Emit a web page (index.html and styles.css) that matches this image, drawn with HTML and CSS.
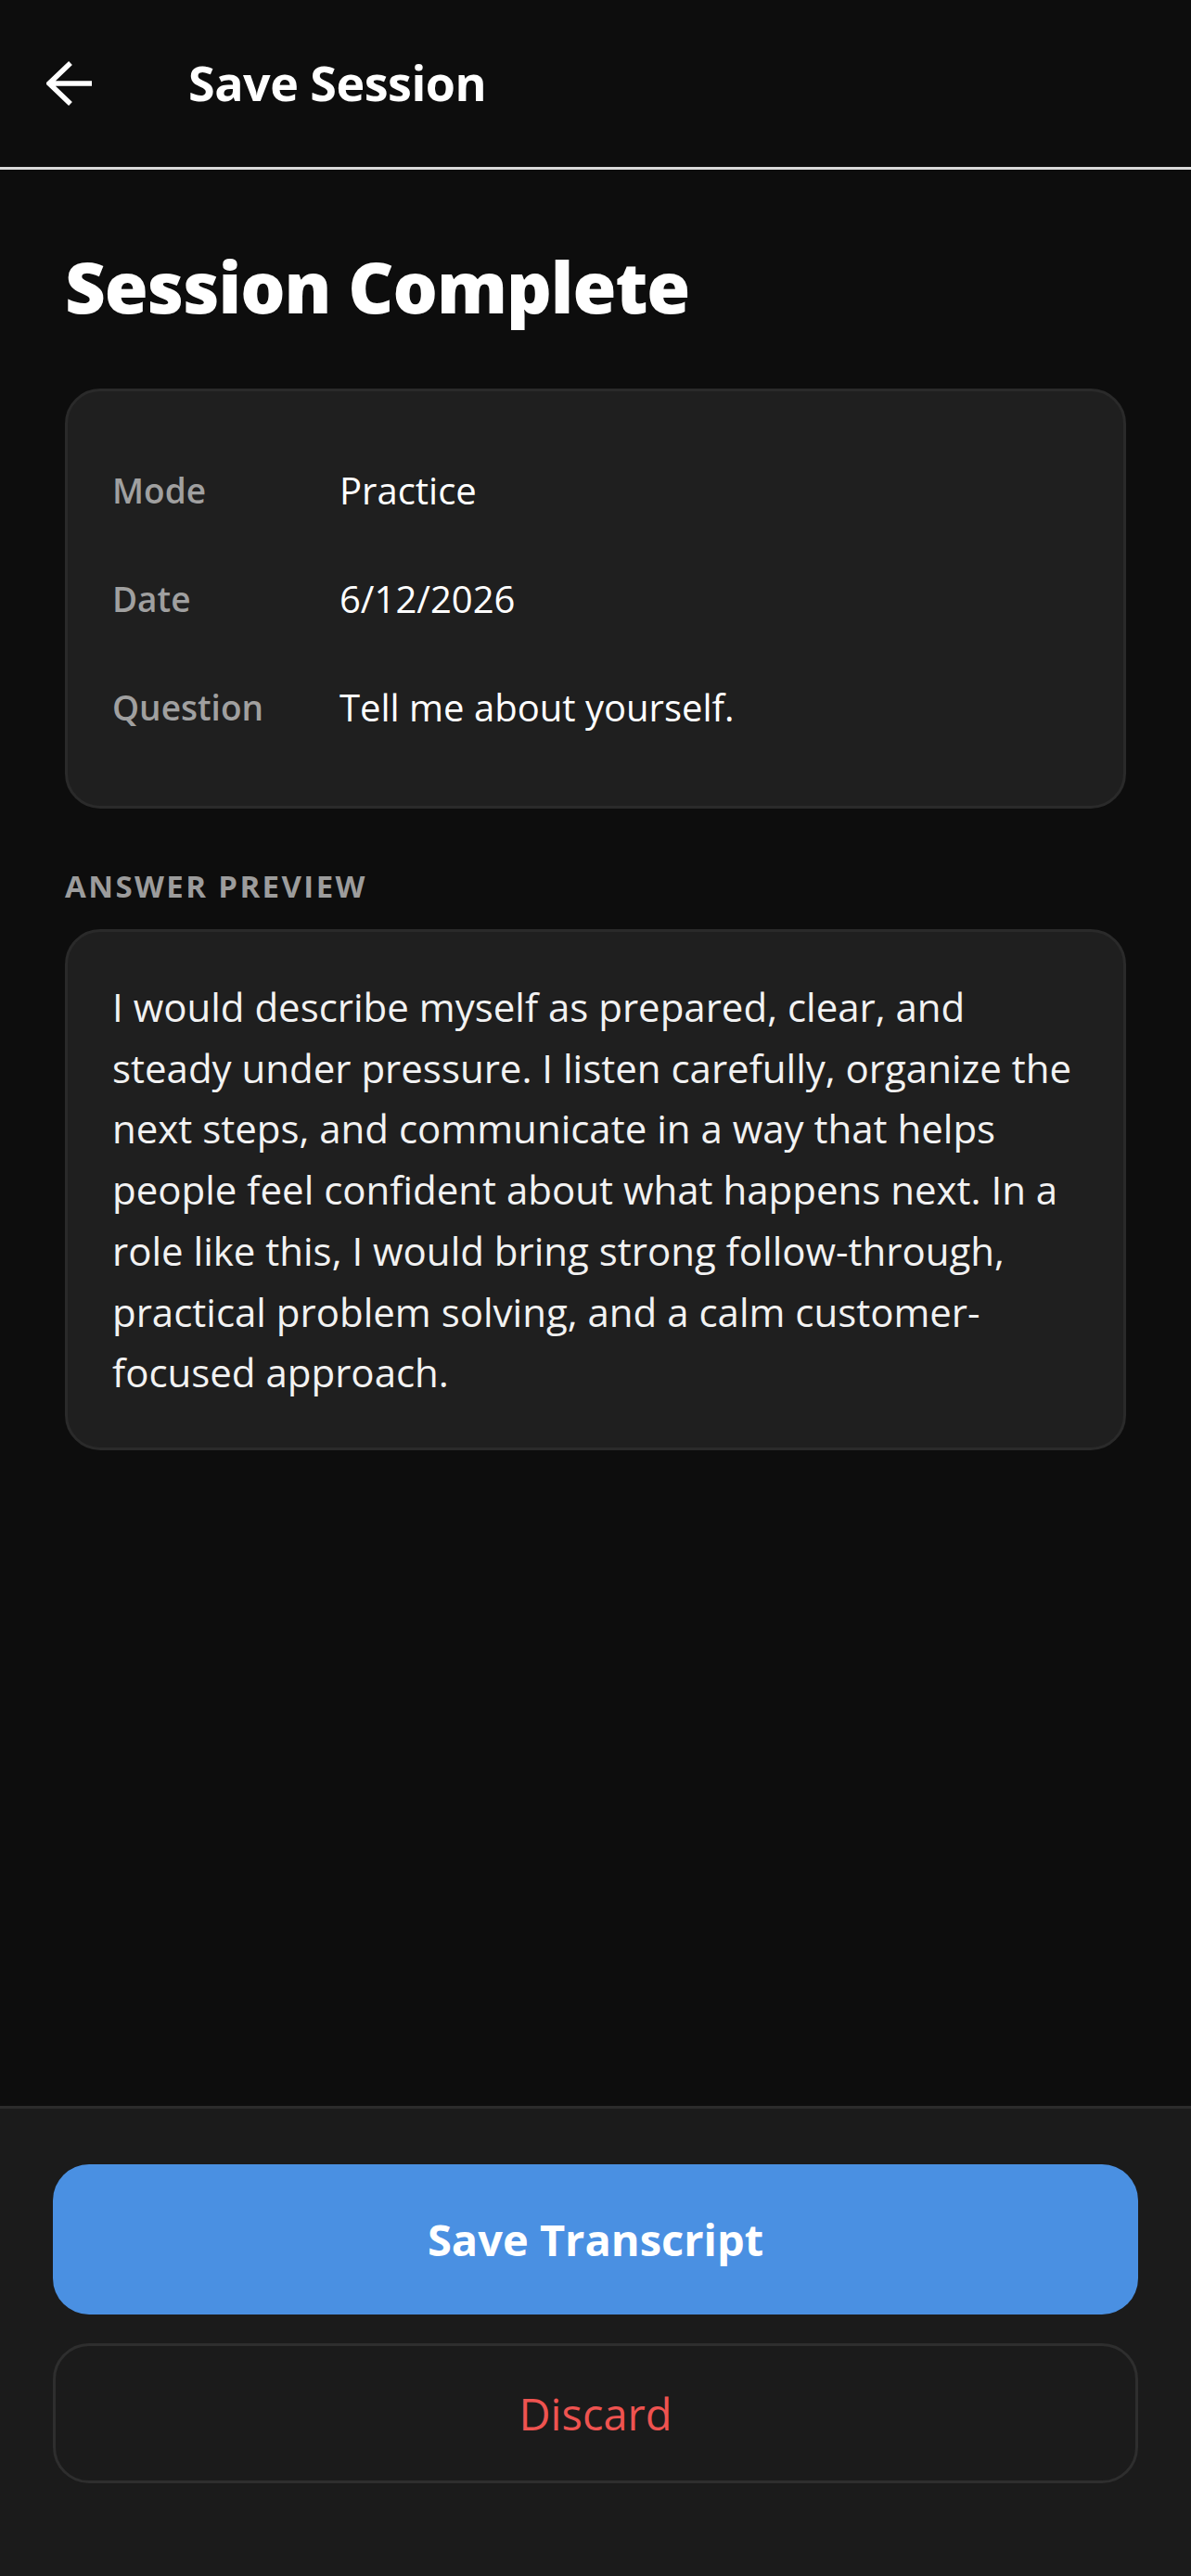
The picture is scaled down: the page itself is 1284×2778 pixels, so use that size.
FILE: index.html
```html
<!DOCTYPE html>
<html lang="en">
<head>
    <meta charset="UTF-8">
    <meta name="viewport" content="width=device-width, initial-scale=1.0">
    <title>Save Session</title>
    <link rel="stylesheet" href="styles.css">
</head>
<body>

<header class="topbar">
    <button class="back-btn" aria-label="Back">
        <svg width="50" height="48" viewBox="0 0 50 48">
            <path d="M26 2 L3 24 L26 46 M4 24 H49" fill="none" stroke="#fff" stroke-width="5.5"/>
        </svg>
    </button>
    <h1>Save Session</h1>
</header>

<main>
    <h2 class="page-title">Session Complete</h2>

    <section class="card info-card">
        <div class="info-row">
            <span class="info-label">Mode</span>
            <span class="info-value">Practice</span>
        </div>
        <div class="info-row">
            <span class="info-label">Date</span>
            <span class="info-value">6/12/2026</span>
        </div>
        <div class="info-row">
            <span class="info-label">Question</span>
            <span class="info-value">Tell me about yourself.</span>
        </div>
    </section>

    <h3 class="section-label">Answer Preview</h3>
    <section class="card answer-card">
        <p>I would describe myself as prepared, clear, and steady under pressure. I listen carefully, organize the next steps, and communicate in a way that helps people feel confident about what happens next. In a role like this, I would bring strong follow-through, practical problem solving, and a calm customer-focused approach.</p>
    </section>
</main>

<footer class="actions">
    <button class="btn btn-primary">Save Transcript</button>
    <button class="btn btn-discard">Discard</button>
</footer>

</body>
</html>
```
FILE: styles.css
```css
body {
    font-family: "Open Sans", "Noto Sans", sans-serif;
    background-color: #0d0d0d;
    color: #fff;
    margin: 0;
    padding: 0;
    min-height: 100vh;
    display: flex;
    flex-direction: column;
}
.topbar {
    height: 180px;
    display: flex;
    align-items: center;
    padding-left: 50px;
    border-bottom: 3px solid #d9d9d9;
}
.back-btn {
    background: none;
    border: none;
    padding: 0;
    width: 50px;
    height: 48px;
    cursor: pointer;
}
.back-btn svg {
    display: block;
}
.topbar h1 {
    margin: 0 0 4px 103px;
    font-size: 52px;
    font-weight: 700;
    letter-spacing: -0.5px;
}
main {
    flex: 1;
    padding: 0 70px;
}
.page-title {
    margin: 74px 0 58px;
    font-size: 76px;
    line-height: 104px;
    font-weight: 800;
    letter-spacing: -1px;
}
.card {
    background-color: #1f1f1f;
    border: 3px solid #2a2a2a;
    border-radius: 38px;
    padding: 48px;
}
.info-row {
    display: flex;
    padding: 36px 0;
    line-height: 45px;
}
.info-label {
    width: 245px;
    flex-shrink: 0;
    color: #a0a0a0;
    font-size: 37px;
    font-weight: 600;
}
.info-value {
    font-size: 40px;
}
.section-label {
    margin: 61px 0 24px;
    font-size: 33px;
    line-height: 45px;
    font-weight: 700;
    letter-spacing: 2.4px;
    text-transform: uppercase;
    color: #9c9c9c;
}
.answer-card p {
    margin: 0;
    font-size: 42px;
    line-height: 65.7px;
    color: #f2f2f2;
}
.actions {
    background-color: #1b1b1b;
    border-top: 3px solid #2b2b2b;
    padding: 60px 57px 100px;
    display: flex;
    flex-direction: column;
    gap: 31px;
}
.btn {
    font-family: inherit;
    font-size: 47px;
    border-radius: 39px;
    cursor: pointer;
}
.btn-primary {
    height: 162px;
    background-color: #4a90e2;
    color: #fff;
    font-weight: 700;
    border: none;
}
.btn-discard {
    height: 151px;
    background-color: transparent;
    color: #ef5350;
    font-weight: 500;
    border: 3px solid #2e2e2e;
}
```
